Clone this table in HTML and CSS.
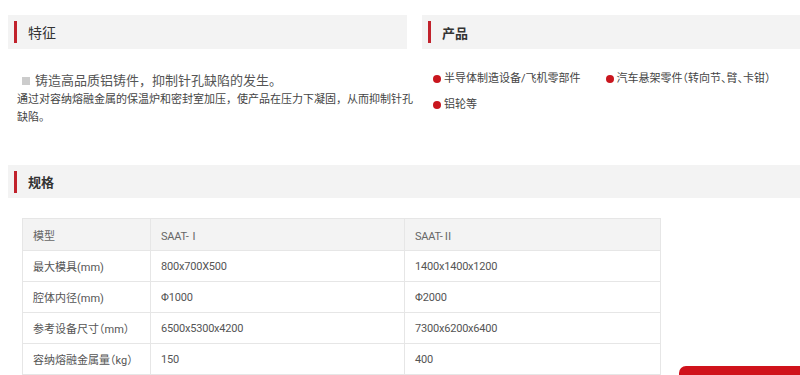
FILE: index.html
```html
<!DOCTYPE html>
<html lang="zh-CN">
<head>
<meta charset="utf-8">
<title>SAAT</title>
<link rel="stylesheet" href="styles.css">
</head>
<body>
<div class="page">
  <div class="top">
    <section class="col">
      <h2 class="head head-light"><span class="mark"></span>特征</h2>
      <div class="feature">
        <p class="lead"><span class="sq"></span>铸造高品质铝铸件，抑制针孔缺陷的发生。</p>
        <p class="desc">通过对容纳熔融金属的保温炉和密封室加压，使产品在压力下凝固，从而抑制针孔缺陷。</p>
      </div>
    </section>
    <section class="col">
      <h2 class="head"><span class="mark"></span>产品</h2>
      <ul class="products">
        <li><span class="dot"></span>半导体制造设备/飞机零部件</li>
        <li><span class="dot"></span>汽车悬架零件（转向节、臂、卡钳）</li>
        <li><span class="dot"></span>铝轮等</li>
      </ul>
    </section>
  </div>
  <section class="spec">
    <h2 class="head"><span class="mark"></span>规格</h2>
    <table class="tbl">
      <tr class="th"><td class="c1">模型</td><td class="c2">SAAT-<span class="rn">Ⅰ</span></td><td class="c3">SAAT-<span class="rn">Ⅱ</span></td></tr>
      <tr><td class="c1">最大模具(mm)</td><td class="c2">800x700X500</td><td class="c3">1400x1400x1200</td></tr>
      <tr><td class="c1">腔体内径(mm)</td><td class="c2">Φ1000</td><td class="c3">Φ2000</td></tr>
      <tr><td class="c1">参考设备尺寸<span class="h">（mm）</span></td><td class="c2">6500x5300x4200</td><td class="c3">7300x6200x6400</td></tr>
      <tr><td class="c1">容纳熔融金属量<span class="h">（kg）</span></td><td class="c2">150</td><td class="c3">400</td></tr>
    </table>
  </section>
</div>
<div class="float-btn"></div>
</body>
</html>
```

FILE: styles.css
```css
html, body {
  margin: 0;
  padding: 0;
  overflow: hidden;
  background: #fff;
}
body {
  font-family: Roboto, "Noto Sans CJK SC", sans-serif;
  color: #555;
}
.page {
  padding: 15px 0 0 8px;
  width: 820px;
}
.top {
  display: grid;
  grid-template-columns: 399px 399px;
  column-gap: 15px;
}
.head {
  margin: 0;
  height: 34px;
  background: #f3f3f3;
  display: flex;
  align-items: center;
  font-size: 13px;
  font-weight: 700;
  color: #333;
  padding-left: 6px;
}
.head-light {
  font-weight: 400;
  font-size: 14px;
}
.mark {
  width: 3px;
  height: 22px;
  background: #c1222c;
  margin-right: 11px;
}
.feature {
  padding: 22px 0 0 9px;
}
.feature p {
  margin: 0;
}
.lead {
  font-size: 13px;
  line-height: 20px;
  color: #555;
  display: flex;
  align-items: center;
}
.sq {
  width: 8px;
  height: 8px;
  background: #ccc;
  margin: 0 5px 0 5px;
}
.desc {
  font-size: 11px;
  line-height: 18px;
  color: #444;
  width: 398px;
}
.products {
  list-style: none;
  margin: 20px 0 0 0;
  padding: 0 0 0 11px;
  display: flex;
  flex-wrap: wrap;
  column-gap: 25px;
  row-gap: 6px;
  width: 370px;
  font-feature-settings: "halt";
}
.products li {
  display: flex;
  align-items: center;
  font-size: 11px;
  line-height: 20px;
  color: #444;
}
.dot {
  width: 8px;
  height: 8px;
  border-radius: 50%;
  background: #c9161e;
  margin-right: 3px;
}
.spec {
  margin-top: 38px;
}
.spec .head {
  width: 786px;
  height: 33px;
}
.tbl {
  margin: 20px 0 0 14px;
  border-collapse: collapse;
  width: 639px;
  font-size: 11px;
  color: #555;
}
.tbl td {
  border: 1px solid #e6e6e6;
  height: 30px;
  padding: 0 0 0 10px;
  text-align: left;
  vertical-align: middle;
  white-space: nowrap;
}
.tbl .c1 { width: 117px; }
.tbl .c2 { width: 243px; letter-spacing: -0.2px; }
.tbl .c3 { letter-spacing: -0.2px; }
.tbl .h { font-feature-settings: "halt"; }
.tbl .rn { font-family: "Noto Sans CJK SC", sans-serif; }
.tbl .th td {
  background: #f3f3f3;
  height: 31px;
  color: #666;
}
.float-btn {
  position: fixed;
  left: 679px;
  top: 366px;
  width: 140px;
  height: 40px;
  background: #d0121b;
  border-radius: 7px 0 0 0;
}
```
